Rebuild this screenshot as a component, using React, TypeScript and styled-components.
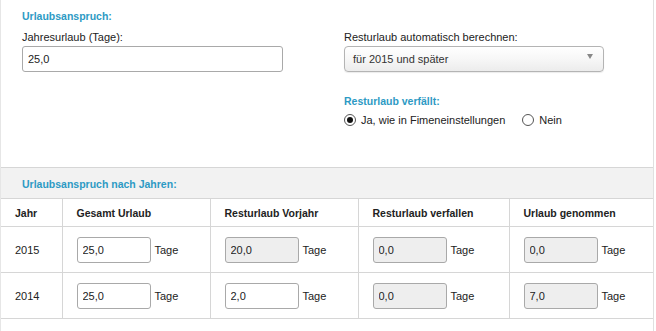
import React, { useState } from "react";
import styled, { createGlobalStyle } from "styled-components";

const rows = [
  { year: 2015, total: "25,0", carry: "20,0", carryEdit: false, expired: "0,0", taken: "0,0" },
  { year: 2014, total: "25,0", carry: "2,0", carryEdit: true, expired: "0,0", taken: "7,0" },
];

export default function App() {
  const [expires, setExpires] = useState("ja");

  return (
    <>
      <GlobalStyle />
      <Page>
        <TopPanel>
          <Column>
            <SectionTitle>Urlaubsanspruch:</SectionTitle>
            <Label>Jahresurlaub (Tage):</Label>
            <TextInput defaultValue="25,0" />
          </Column>
          <Column>
            <Spacer />
            <Label>Resturlaub automatisch berechnen:</Label>
            <SelectBox>
              <span>für 2015 und später</span>
              <Arrow />
            </SelectBox>
            <SectionTitle $top={22}>Resturlaub verfällt:</SectionTitle>
            <RadioRow>
              <RadioLabel onClick={() => setExpires("ja")}>
                <Radio $checked={expires === "ja"} />
                Ja, wie in Fimeneinstellungen
              </RadioLabel>
              <RadioLabel onClick={() => setExpires("nein")}>
                <Radio $checked={expires === "nein"} />
                Nein
              </RadioLabel>
            </RadioRow>
          </Column>
        </TopPanel>

        <Band>
          <SectionTitle>Urlaubsanspruch nach Jahren:</SectionTitle>
        </Band>

        <Table>
          <colgroup>
            <col style={{ width: 61 }} />
            <col style={{ width: 148 }} />
            <col style={{ width: 148 }} />
            <col style={{ width: 151 }} />
            <col />
          </colgroup>
          <thead>
            <tr>
              <Th>Jahr</Th>
              <Th>Gesamt Urlaub</Th>
              <Th>Resturlaub Vorjahr</Th>
              <Th>Resturlaub verfallen</Th>
              <Th>Urlaub genommen</Th>
            </tr>
          </thead>
          <tbody>
            {rows.map((r) => (
              <tr key={r.year}>
                <Td>{r.year}</Td>
                <Td>
                  <Cell>
                    <SmallInput defaultValue={r.total} />
                    <Unit>Tage</Unit>
                  </Cell>
                </Td>
                <Td>
                  <Cell>
                    <SmallInput defaultValue={r.carry} $readOnly={!r.carryEdit} readOnly={!r.carryEdit} />
                    <Unit>Tage</Unit>
                  </Cell>
                </Td>
                <Td>
                  <Cell>
                    <SmallInput defaultValue={r.expired} $readOnly readOnly />
                    <Unit>Tage</Unit>
                  </Cell>
                </Td>
                <Td>
                  <Cell>
                    <SmallInput defaultValue={r.taken} $readOnly readOnly />
                    <Unit>Tage</Unit>
                  </Cell>
                </Td>
              </tr>
            ))}
          </tbody>
        </Table>
      </Page>
    </>
  );
}

const GlobalStyle = createGlobalStyle`
  body {
    margin: 0;
    background: #fff;
    font-family: "Liberation Sans", Arial, sans-serif;
    font-size: 11px;
    color: #222;
  }
`;

const Page = styled.div`
  width: 654px;
  height: 331px;
  overflow: hidden;
  box-sizing: border-box;
  border-left: 1px solid #e6e6e6;
  border-right: 1px solid #e0e0e0;
`;

const TopPanel = styled.div`
  display: grid;
  grid-template-columns: 322px 1fr;
  padding: 9px 0 0 21px;
  height: 168px;
  box-sizing: border-box;
  border-bottom: 1px solid #d6d6d6;
`;

const Column = styled.div`
  display: flex;
  flex-direction: column;
  align-items: flex-start;
`;

const Spacer = styled.div`
  height: 14px;
`;

const SectionTitle = styled.div<{ $top?: number }>`
  color: #2d9ac4;
  font-weight: bold;
  font-size: 10.5px;
  line-height: 14px;
  margin-top: ${(p) => p.$top ?? 0}px;
`;

const Label = styled.div`
  margin-top: 7px;
  line-height: 14px;
  color: #222;
`;

const TextInput = styled.input`
  margin-top: 2px;
  width: 261px;
  height: 26px;
  box-sizing: border-box;
  border: 1px solid #a9a9a9;
  border-radius: 3px;
  padding: 0 5px;
  font: inherit;
  color: #222;
  outline: none;
`;

const SelectBox = styled.div`
  margin-top: 2px;
  width: 260px;
  height: 26px;
  box-sizing: border-box;
  border: 1px solid #b4b4b4;
  border-radius: 4px;
  padding: 0 10px 0 8px;
  display: flex;
  align-items: center;
  justify-content: space-between;
  background: linear-gradient(#ffffff 0%, #f7f7f7 50%, #ececec 100%);
  color: #333;
  box-shadow: 0 1px 1px rgba(0, 0, 0, 0.08);
`;

const Arrow = styled.span`
  width: 0;
  height: 0;
  border-left: 3px solid transparent;
  border-right: 3px solid transparent;
  border-top: 5px solid #888;
  margin-top: -5px;
`;

const RadioRow = styled.div`
  display: flex;
  gap: 17px;
  margin-top: 6px;
`;

const RadioLabel = styled.label`
  display: flex;
  align-items: center;
  gap: 5px;
  cursor: pointer;
  color: #222;
`;

const Radio = styled.span<{ $checked: boolean }>`
  width: 12px;
  height: 12px;
  border: 1px solid #555;
  border-radius: 50%;
  box-sizing: border-box;
  display: flex;
  align-items: center;
  justify-content: center;
  background: #fff;

  &::after {
    content: "";
    width: 6px;
    height: 6px;
    border-radius: 50%;
    background: #111;
    display: ${(p) => (p.$checked ? "block" : "none")};
  }
`;

const Band = styled.div`
  background: #f2f2f2;
  height: 31px;
  box-sizing: border-box;
  padding: 9px 0 0 21px;
  border-bottom: 1px solid #d6d6d6;
`;

const Table = styled.table`
  width: 100%;
  border-collapse: collapse;
  table-layout: fixed;

  th:first-child,
  td:first-child {
    border-left: none;
  }
`;

const Th = styled.th`
  text-align: left;
  font-weight: bold;
  font-size: 10.5px;
  height: 27px;
  padding: 0 0 0 14px;
  border-left: 1px solid #d6d6d6;
  border-bottom: 1px solid #d6d6d6;
  color: #222;
  white-space: nowrap;
`;

const Td = styled.td`
  height: 45px;
  padding: 0 0 0 14px;
  border-left: 1px solid #d6d6d6;
  border-bottom: 1px solid #d6d6d6;
  color: #222;
`;

const Cell = styled.div`
  display: flex;
  align-items: center;
  gap: 4px;
`;

const SmallInput = styled.input<{ $readOnly?: boolean }>`
  width: 74px;
  height: 26px;
  box-sizing: border-box;
  border: 1px solid #a9a9a9;
  border-radius: 3px;
  padding: 0 5px;
  font: inherit;
  color: #222;
  background: ${(p) => (p.$readOnly ? "#eeeeee" : "#ffffff")};
  outline: none;
`;

const Unit = styled.span`
  color: #222;
`;
